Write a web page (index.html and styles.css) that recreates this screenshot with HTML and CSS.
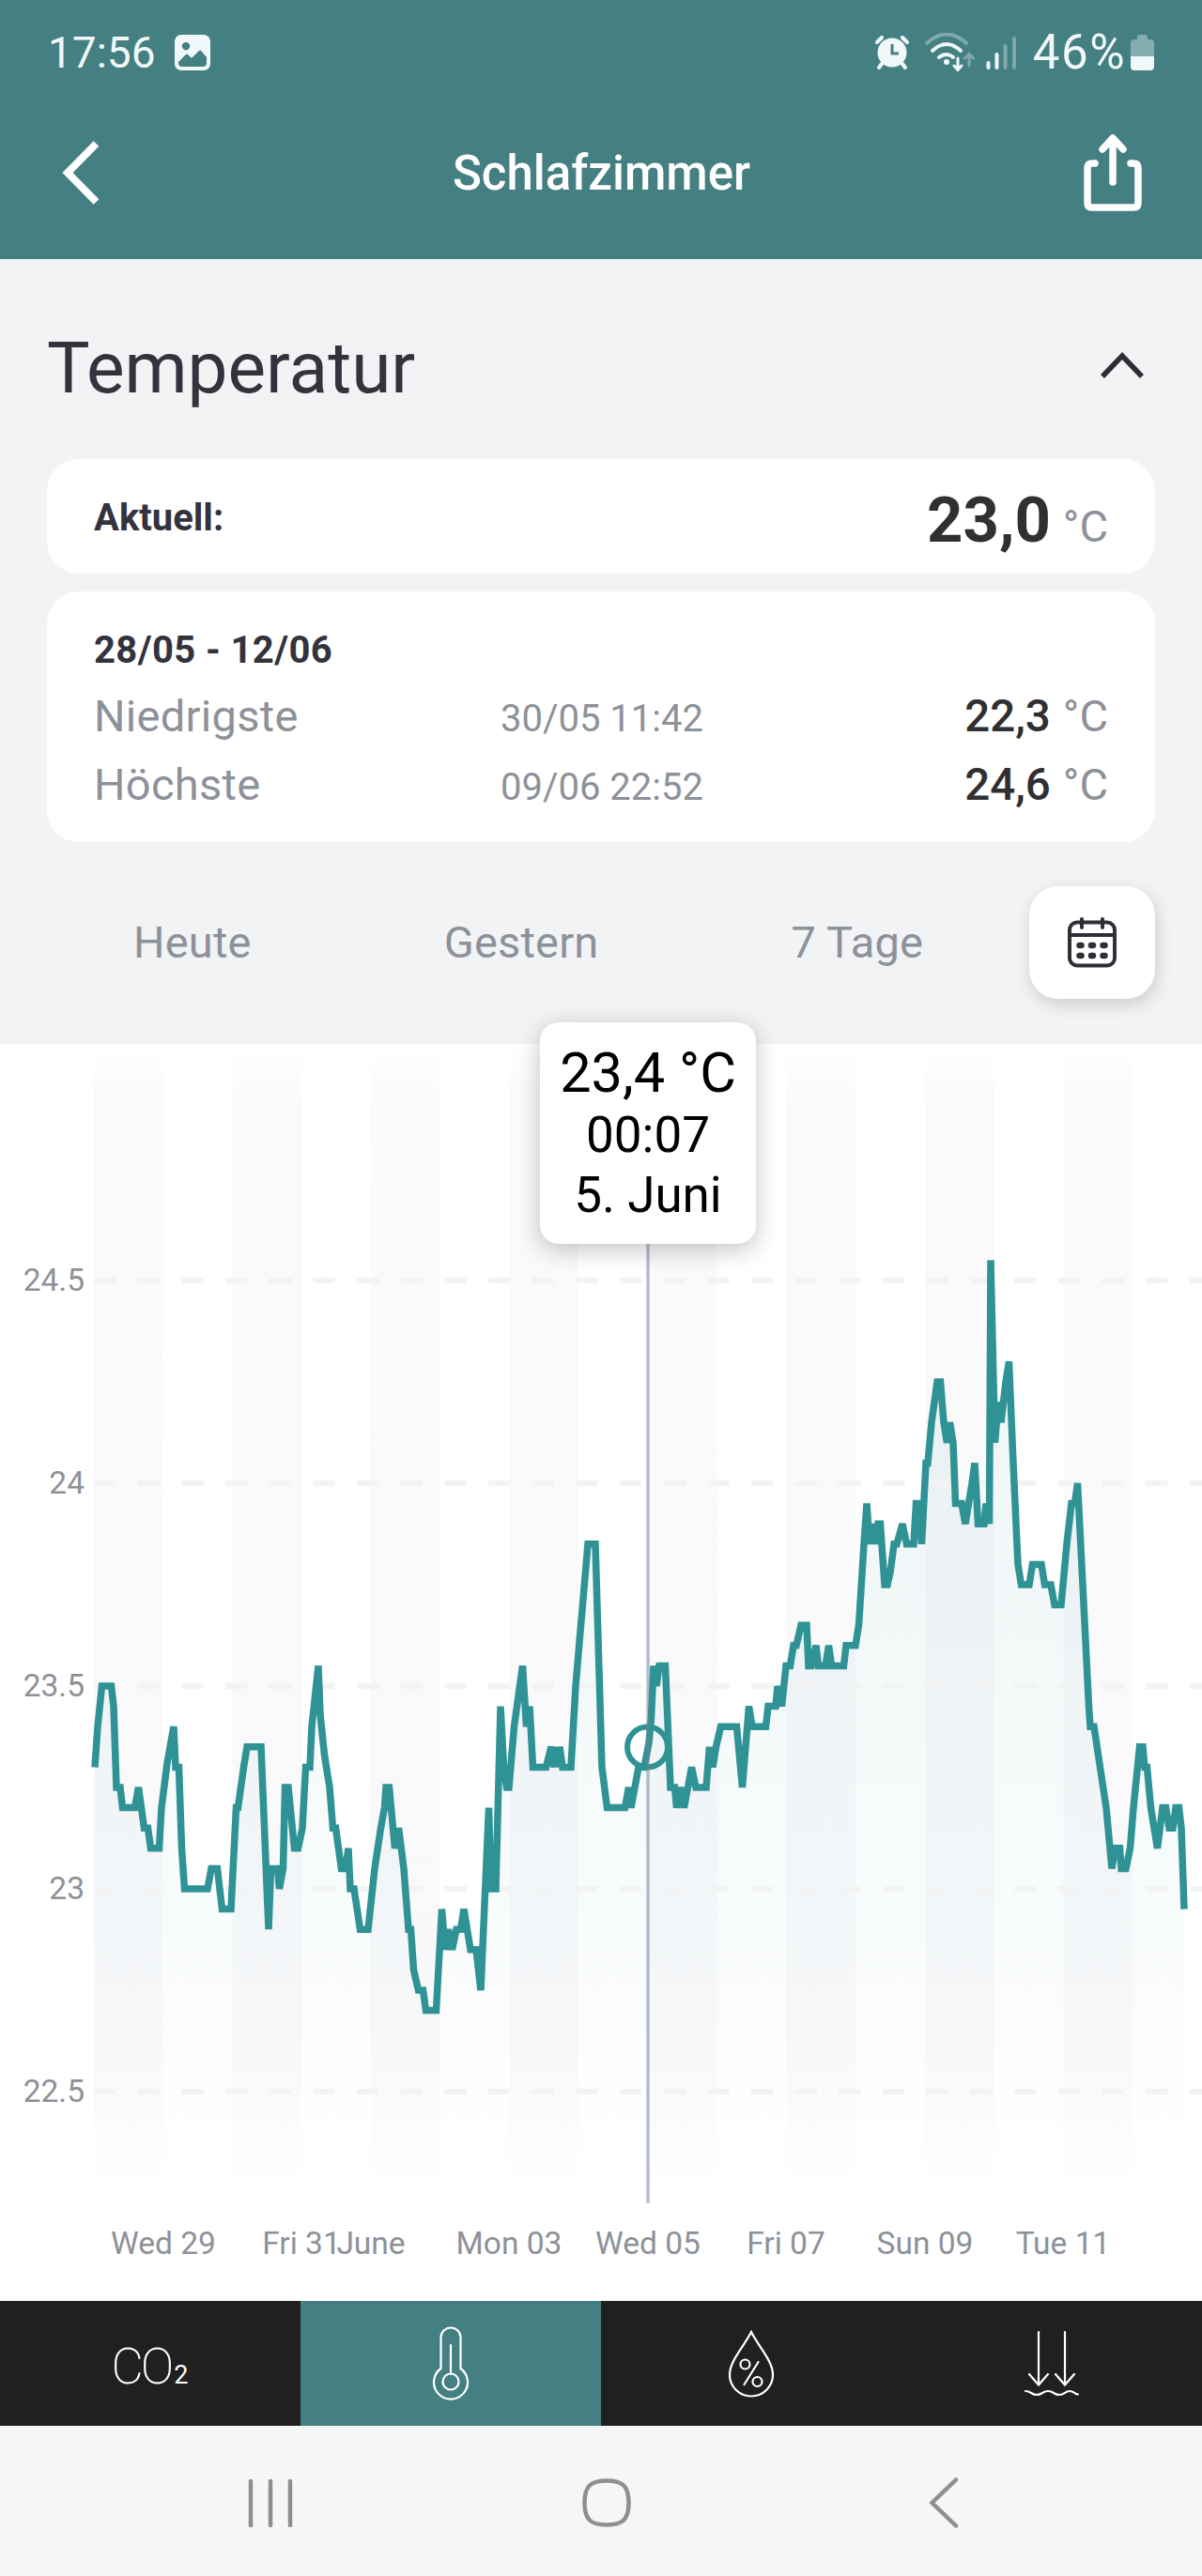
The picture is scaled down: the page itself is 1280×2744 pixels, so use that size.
FILE: index.html
```html
<!DOCTYPE html>
<html lang="de">
<head>
  <meta charset="UTF-8">
  <meta name="viewport" content="width=device-width, initial-scale=1">
  <title>Schlafzimmer</title>
  <link rel="stylesheet" href="styles.css">
</head>
<body>

  <!-- HEADER -->
  <header class="header">
    <div class="status-bar">
      <div class="status-left">
        <span class="status-text">17:56</span>
        <svg class="icon-image" width="38" height="38" viewBox="0 0 38 38">
          <path fill-rule="evenodd" fill="#f0f8fa" d="M7 0h24a7 7 0 0 1 7 7v24a7 7 0 0 1-7 7H7a7 7 0 0 1-7-7V7a7 7 0 0 1 7-7zM12 8a4.200 4.200 0 1 0 .01 0zM4 29v1a4 4 0 0 0 4 4h22a4 4 0 0 0 4-4v-6l-6-7q-1-1-2 0l-7 7q-1 1-2 0l-3-3q-1-1-2 0z"/>
        </svg>
      </div>
      <div class="status-right">
        <svg width="36" height="36" viewBox="0 0 36 36" class="icon-alarm">
          <circle cx="18" cy="18" r="15.500" fill="#f0f8fa"/>
          <path d="M2 7l5-5M34 7l-5-5M7 30l-3 4M29 30l3 4" stroke="#f0f8fa" stroke-width="4" stroke-linecap="round"/>
          <path d="M18 9v10h7" fill="none" stroke="#447f81" stroke-width="3"/>
        </svg>
        <svg width="54" height="42" viewBox="0 0 54 42" class="icon-wifi">
          <g fill="none" stroke="#f0f8fa" stroke-width="4" stroke-linecap="round">
            <path d="M2 11q21-19 42 0" opacity=".35"/>
            <path d="M8 19q15-14 30 0M15 26q8-6 15 0"/>
            <path d="M35 27v12M31 35l4 4.500 4-4.500" stroke-width="3"/>
            <path d="M47 35V23M42.500 27l4.500-4.500 4.500 4.500" stroke-width="3" opacity=".35"/>
          </g>
          <circle cx="23" cy="31" r="3" fill="#f0f8fa"/>
        </svg>
        <svg width="33" height="35" viewBox="0 0 33 35" class="icon-signal">
          <g stroke="#f0f8fa" stroke-width="4" stroke-linecap="round">
            <path d="M2.500 28v5M11.500 19v14"/>
            <path d="M20.500 10v23M30 2v31" opacity=".35"/>
          </g>
        </svg>
        <span class="status-text battery-text">46%</span>
        <svg width="25" height="38" viewBox="0 0 25 38" class="icon-battery">
          <path d="M7 5V2q0-2 2-2h7q2 0 2 2v3h3q4 0 4 4v14H0V9q0-4 4-4z" fill="#f0f8fa" opacity=".38"/>
          <path d="M0 23h25v11q0 4-4 4H4q-4 0-4-4z" fill="#f0f8fa"/>
        </svg>
      </div>
    </div>
    <div class="app-bar">
      <svg width="44" height="70" viewBox="0 0 44 70" class="icon-back">
        <path d="M37.500 4L7 35l30.500 31" fill="none" stroke="#fff" stroke-width="8"/>
      </svg>
      <h1>Schlafzimmer</h1>
      <svg width="62" height="82" viewBox="0 0 62 82" class="icon-share">
        <g fill="none" stroke="#fff" stroke-width="7.500" stroke-linecap="round" stroke-linejoin="round">
          <path d="M12 31H9q-5 0-5 5v37q0 5 5 5h44q5 0 5-5V36q0-5-5-5h-3"/>
          <path d="M31 51V5M20 16L31 4l11 12"/>
        </g>
      </svg>
    </div>
  </header>

  <!-- SUMMARY -->
  <section class="summary">
    <div class="summary-title">
      <h2>Temperatur</h2>
      <svg width="48" height="36" viewBox="0 0 48 36">
        <path d="M3 27L24 5l21 22" fill="none" stroke="#2e2e32" stroke-width="5.500"/>
      </svg>
    </div>

    <div class="card current">
      <span class="card-label">Aktuell:</span>
      <span class="value"><b class="value-big">23,0</b><span class="unit">°C</span></span>
    </div>

    <div class="card period">
      <div class="card-label">28/05 - 12/06</div>
      <div class="period-row">
        <span class="name">Niedrigste</span>
        <span class="time">30/05 11:42</span>
        <span class="value"><b>22,3</b><span class="unit">°C</span></span>
      </div>
      <div class="period-row">
        <span class="name">Höchste</span>
        <span class="time">09/06 22:52</span>
        <span class="value"><b>24,6</b><span class="unit">°C</span></span>
      </div>
    </div>

    <div class="ranges">
      <span>Heute</span>
      <span>Gestern</span>
      <span>7 Tage</span>
      <button class="calendar">
        <svg width="54" height="54" viewBox="0 0 54 54">
          <g fill="none" stroke="#2f2f38" stroke-width="4" stroke-linecap="round">
            <rect x="3" y="5.500" width="48" height="46" rx="8"/>
            <path d="M3 19h48M16 2v9M38 2v9"/>
            <path d="M13.500 30h2M26 30h2M38.500 30h2M13.500 41h2M26 41h2M38.500 41h2" stroke-width="6.500"/>
          </g>
        </svg>
      </button>
    </div>
  </section>

  <!-- CHART -->
  <section class="chart">
    <svg id="plot" width="1280" height="1339" viewBox="0 1112 1280 1339">
      <defs>
        <linearGradient id="bandFill" x1="0" y1="1112" x2="0" y2="2345" gradientUnits="userSpaceOnUse">
          <stop offset="0" stop-color="#fafafb" stop-opacity="0"/>
          <stop offset=".05" stop-color="#fafafb"/>
          <stop offset=".86" stop-color="#f9f9fb"/>
          <stop offset="1" stop-color="#fafafb" stop-opacity="0"/>
        </linearGradient>
        <linearGradient id="areaFill" x1="0" y1="1340" x2="0" y2="2330" gradientUnits="userSpaceOnUse">
          <stop offset="0" stop-color="#2f8f94" stop-opacity=".085"/>
          <stop offset=".4" stop-color="#2f8f94" stop-opacity=".06"/>
          <stop offset="1" stop-color="#2f8f94" stop-opacity="0"/>
        </linearGradient>
      </defs>
      <g id="bands" fill="url(#bandFill)"></g>
      <path id="area" fill="url(#areaFill)"/>
      <g id="grid" class="grid"></g>
      <path id="line" class="line"/>
      <g id="labelsY" class="labels" text-anchor="end"></g>
      <g id="labelsX" class="labels" text-anchor="middle"></g>
      <circle class="marker" cx="689.500" cy="1861" r="21.500"/>
      <path class="cursor" d="M690 1320V2347"/>
    </svg>
    <div class="tooltip">
      <div class="tooltip-value">23,4 °C</div>
      <div>00:07</div>
      <div>5. Juni</div>
    </div>
  </section>

  <!-- TABS -->
  <nav class="tabs">
    <div class="tab"><span class="co2">CO<span class="co2-sub">2</span></span></div>
    <div class="tab active">
      <svg width="42" height="80" viewBox="0 0 42 80">
        <g fill="none" stroke="#fff" stroke-width="2.200">
          <path d="M10.500 45V12a10.500 10.500 0 0 1 21 0v33a18 18 0 1 1-21 0z"/>
          <circle cx="21" cy="59" r="8.500"/>
          <path d="M21 20v30.500" stroke-linecap="round"/>
        </g>
      </svg>
    </div>
    <div class="tab">
      <svg width="50" height="74" viewBox="0 0 50 74">
        <g fill="none" stroke="#fff" stroke-width="2.200" stroke-linecap="round">
          <path d="M25 3C17 19 2 34 2 48.500a23 23 0 0 0 46 0C48 34 33 19 25 3z"/>
          <ellipse cx="18.500" cy="37.500" rx="5" ry="5"/>
          <ellipse cx="31.500" cy="56" rx="5" ry="5"/>
          <path d="M32.500 35L17.500 59"/>
        </g>
      </svg>
    </div>
    <div class="tab">
      <svg width="60" height="72" viewBox="0 0 60 72">
        <g fill="none" stroke="#fff" stroke-width="2.200" stroke-linecap="round">
          <path d="M16 2v56M6 47l10 11.500L26 47M44 2v56M34 47l10 11.500L54 47"/>
          <path d="M2 65c6 0 6 4 12 4s6-4 12-4 6 4 12 4 6-4 11-4 5 3.500 9 3.500"/>
        </g>
      </svg>
    </div>
  </nav>

  <!-- ANDROID BUTTONS -->
  <div class="navbar">
    <svg width="48" height="52" viewBox="0 0 48 52">
      <path d="M3 3v47M24 3v47M45 3v47" stroke="#8f8f8f" stroke-width="4.500" stroke-linecap="round"/>
    </svg>
    <svg width="52" height="52" viewBox="0 0 52 52">
      <path d="M26 2.500C43 2.500 49.500 8 49.500 26S43 49.500 26 49.500 2.500 44 2.500 26 9 2.500 26 2.500z" fill="none" stroke="#8f8f8f" stroke-width="4.500"/>
    </svg>
    <svg width="32" height="54" viewBox="0 0 32 54" class="nav-back">
      <path d="M29 2.500L3.500 27 29 51.500" fill="none" stroke="#8f8f8f" stroke-width="4.500" stroke-linecap="round"/>
    </svg>
  </div>

  <script src="chart.js"></script>
</body>
</html>
```
FILE: styles.css
```css
* {
  margin: 0;
  padding: 0;
  box-sizing: border-box;
}
body {
  width: 1280px;
  background: #fff;
  font-family: Roboto, sans-serif;
  color: #33333d;
}
svg {
  display: block;
  flex-shrink: 0;
}

/* ===== HEADER ===== */
.header {
  height: 276px;
  background: #447f81;
  color: #fff;
}
.status-bar {
  display: flex;
  justify-content: space-between;
  height: 112px;
  padding: 0 51px;
}
.status-left, .status-right {
  display: flex;
  align-items: center;
}
.status-text {
  font-size: 46px;
  line-height: 112px;
  color: #f0f8fa;
}
.battery-text {
  font-size: 51px;
  letter-spacing: 1.5px;
}
.icon-image { margin-left: 20px; }
.icon-wifi { margin-left: 17px; }
.icon-signal { margin: 0 17px 0 11px; }
.icon-battery { margin-left: 5px; }
.app-bar {
  display: grid;
  grid-template-columns: 1fr auto 1fr;
  align-items: center;
  height: 142px;
  padding: 0 64px 0 65px;
}
.app-bar h1 {
  font-size: 51px;
  font-weight: 500;
  line-height: 142px;
  padding-top: 2px;
}
.icon-share { justify-self: end; }

/* ===== SUMMARY ===== */
.summary {
  height: 836px;
  padding: 62px 50px 48px 50px;
  background: #f2f3f5;
}
.summary-title {
  display: flex;
  align-items: center;
  justify-content: space-between;
  height: 107px;
  margin-bottom: 44px;
  padding-right: 11px;
}
.summary-title h2 {
  font-size: 76.5px;
  font-weight: 400;
}
.card {
  padding: 0 50px;
  border-radius: 34px;
  background: #fff;
}
.card-label {
  font-size: 40px;
  font-weight: 700;
}
.current {
  display: flex;
  align-items: center;
  justify-content: space-between;
  height: 122px;
  margin-bottom: 19px;
}
.current .card-label { padding-top: 2px; }
.current .value { padding-top: 8px; }
.value b {
  font-size: 47.5px;
  font-weight: 500;
  color: #303032;
}
.value .value-big {
  font-size: 67px;
  font-weight: 700;
}
.unit {
  margin-left: 13px;
  font-size: 47px;
  color: #8d9199;
}
.period {
  height: 267px;
  padding-top: 26px;
}
.period .card-label {
  line-height: 73px;
  height: 72px;
  letter-spacing: 0.4px;
}
.period-row {
  display: grid;
  grid-template-columns: 433px 1fr auto;
  align-items: baseline;
  height: 73px;
  line-height: 70px;
  color: #8d9199;
}
.name {
  font-size: 47px;
  letter-spacing: 0.3px;
}
.time { font-size: 40px; }
.ranges {
  display: flex;
  align-items: center;
  gap: 205px;
  height: 120px;
  margin-top: 47px;
  padding-left: 92px;
  font-size: 47px;
  line-height: 118px;
  letter-spacing: 0.2px;
  white-space: nowrap;
  color: #8d9199;
}
.calendar {
  display: flex;
  align-items: center;
  justify-content: center;
  flex-shrink: 0;
  width: 134px;
  height: 120px;
  margin-left: auto;
  border: none;
  border-radius: 31px;
  background: #fff;
  box-shadow: 2px 6px 18px rgba(0, 0, 0, 0.16);
}
/* the button sits closer to its neighbour than the gap allows */
.ranges span:nth-child(3) { margin-right: -120px; }

/* ===== CHART ===== */
.chart {
  position: relative;
  height: 1339px;
}
.grid {
  stroke: #f3f3f4;
  stroke-width: 6;
  stroke-dasharray: 23.3 23.37;
}
.line {
  fill: none;
  stroke: #2f9295;
  stroke-width: 7.5;
  stroke-linejoin: miter;
  stroke-miterlimit: 2;
}
.labels {
  font-size: 33.5px;
  fill: #8d9199;
}
.marker {
  fill: none;
  stroke: #2f9295;
  stroke-width: 6;
}
.cursor {
  stroke: #6e7f98;
  stroke-opacity: 0.5;
  stroke-width: 3.5;
}
.tooltip {
  position: absolute;
  top: -23px;
  left: 575px;
  width: 230px;
  height: 236px;
  padding-top: 20px;
  border-radius: 20px;
  background: #fff;
  box-shadow: 0 6px 26px rgba(0, 0, 0, 0.24);
  color: #000;
  font-size: 53px;
  line-height: 63.5px;
  text-align: center;
  white-space: nowrap;
}
.tooltip-value {
  font-size: 59.5px;
  line-height: 69px;
}

/* ===== TABS ===== */
.tabs {
  display: grid;
  grid-template-columns: repeat(4, 1fr);
  height: 133px;
  background: #202020;
}
.tab {
  display: flex;
  align-items: center;
  justify-content: center;
}
.active { background: #447f81; }
.co2 {
  padding: 7px 4px 0 0;
  color: #fff;
  font-size: 53px;
  font-weight: 200;
  letter-spacing: -3px;
}
.co2-sub {
  margin-left: 3px;
  font-size: 27px;
  font-weight: 400;
}

/* ===== ANDROID BUTTONS ===== */
.navbar {
  display: flex;
  align-items: center;
  gap: 308px;
  height: 160px;
  padding: 3px 0 0 264px;
  background: #f5f6f8;
}
.nav-back { margin-left: 9px; }
```
FILE: chart.js
```js
// [x position, temperature]
const data = [
  [101, 23.3], [104, 23.4], [108.5, 23.5], [118.5, 23.5], [121, 23.45], [124, 23.25], [128, 23.25],
  [130.5, 23.2], [143.5, 23.2], [147.5, 23.25], [153.5, 23.15], [157.5, 23.15], [160.5, 23.1], [169.5, 23.1],
  [172, 23.2], [178, 23.31], [185, 23.4], [187, 23.3], [190.5, 23.3], [193.5, 23.1], [196.5, 23],
  [221, 23], [225, 23.05], [231.5, 23.05], [236.5, 22.95], [246, 22.95], [251.5, 23.2], [253.5, 23.2],
  [259.5, 23.3], [263, 23.35], [278, 23.35], [286, 22.9], [288.5, 23.05], [295.5, 23.05], [297.5, 23],
  [301.5, 23.05], [303.5, 23.25], [307, 23.25], [313.5, 23.1], [317.5, 23.1], [322, 23.15], [325.5, 23.3],
  [330, 23.3], [332, 23.4], [339, 23.55], [341, 23.43], [345.5, 23.33], [351, 23.25], [354.5, 23.15],
  [357.5, 23.15], [363.5, 23.05], [368, 23.05], [371, 23.1], [373, 23], [377, 23], [383.5, 22.9],
  [392, 22.9], [399, 23.05], [405.5, 23.15], [409.5, 23.2], [411, 23.25], [414.5, 23.25], [420.5, 23.1],
  [424.5, 23.15], [430, 23.05], [435, 22.9], [437.5, 22.9], [440.5, 22.8], [445.5, 22.75], [450.5, 22.75],
  [453.5, 22.7], [464.5, 22.7], [470.5, 22.95], [474, 22.85], [477.5, 22.9], [481.5, 22.85], [486, 22.9],
  [490.5, 22.9], [494, 22.95], [501, 22.85], [507, 22.85], [512, 22.75], [520.5, 23.2], [523, 23],
  [528, 23], [533, 23.45], [536.5, 23.3], [539.5, 23.25], [542, 23.25], [547.5, 23.4], [556.5, 23.55], [560.5, 23.4],
  [564, 23.45], [567.5, 23.3], [581.5, 23.3], [587, 23.35], [590, 23.3], [592, 23.35], [594, 23.3], [596, 23.35], [599, 23.3], [608, 23.3],
  [613, 23.5], [626, 23.85], [634, 23.85], [641, 23.3], [646.5, 23.2], [665.5, 23.2], [669.5, 23.25],
  [672, 23.2], [680, 23.3], [686, 23.3], [691, 23.36], [693.5, 23.42], [696, 23.55], [699, 23.5], [702, 23.55], [708.5, 23.55],
  [714, 23.25], [718.5, 23.25], [720.5, 23.2], [724.5, 23.25], [728.5, 23.2], [736.5, 23.3], [741, 23.25],
  [752, 23.25], [755.5, 23.35], [759, 23.3], [762.5, 23.35], [767.5, 23.4], [784.5, 23.4], [790.5, 23.25],
  [797.5, 23.45], [801, 23.4], [815.5, 23.4], [818, 23.45], [826, 23.45], [828, 23.5], [832.5, 23.45],
  [837, 23.55], [841.5, 23.55], [845, 23.6], [848, 23.6], [853, 23.65], [859, 23.65], [861, 23.55], [864, 23.55],
  [869, 23.6], [871.5, 23.55], [879, 23.55], [882.5, 23.6], [885.5, 23.55], [898.5, 23.55], [901, 23.6],
  [911, 23.6], [914.5, 23.65], [920, 23.85], [923, 23.95], [926, 23.85], [929, 23.9], [932, 23.85],
  [935, 23.9], [937.5, 23.9], [942, 23.75], [945, 23.75], [948, 23.78], [952, 23.85], [955, 23.85],
  [961, 23.9], [965.5, 23.85], [973, 23.85], [975.5, 23.95], [978, 23.95], [981.5, 23.85], [986, 24.05],
  [988, 24.05], [992, 24.15], [998, 24.25], [1001.5, 24.25], [1005, 24.15], [1008.5, 24.1], [1011.5, 24.15],
  [1015, 24.1], [1017.5, 23.95], [1024, 23.95], [1028, 23.9], [1035, 24], [1038, 24.05], [1041.5, 23.9],
  [1048, 23.9], [1050, 23.95], [1053.5, 23.9], [1055, 24.55], [1059.5, 24.1], [1063, 24.2], [1066, 24.15],
  [1071, 24.25], [1074.5, 24.3], [1079, 24.05], [1084, 23.8], [1087.5, 23.75], [1096, 23.75], [1099.5, 23.8],
  [1109, 23.8], [1112.5, 23.75], [1119, 23.75], [1123, 23.7], [1130, 23.7], [1136, 23.85], [1141, 23.95],
  [1144.5, 23.95], [1147.5, 24], [1153, 23.75], [1159.5, 23.45], [1161, 23.4], [1165, 23.4], [1178, 23.2],
  [1182, 23.1], [1184, 23.05], [1187.5, 23.1], [1192.5, 23.1], [1194, 23.05], [1199, 23.05], [1203.5, 23.1],
  [1207, 23.2], [1213.5, 23.35], [1217, 23.35], [1219, 23.3], [1221.5, 23.3], [1225.5, 23.2], [1232.5, 23.1],
  [1238, 23.2], [1241.5, 23.2], [1245, 23.15], [1249, 23.15], [1252, 23.2], [1255.5, 23.2], [1258, 23.15],
  [1261, 22.95]
];

const svgNS = "http://www.w3.org/2000/svg";
const bottom = 2347;

function yPos(temp) {
  return 2012 - (temp - 23) * 432;
}

function add(parentId, name, attrs, text) {
  const el = document.createElementNS(svgNS, name);
  for (const key in attrs) {
    el.setAttribute(key, attrs[key]);
  }
  if (text) el.textContent = text;
  document.getElementById(parentId).appendChild(el);
}

// Every second day is shaded
for (let i = 0; i < 8; i++) {
  add("bands", "rect", { x: 100 + i * 147.5, y: 1112, width: 73.5, height: bottom - 1112 });
}

[24.5, 24, 23.5, 23, 22.5].forEach(function(t) {
  const y = yPos(t);
  add("grid", "path", { d: "M100 " + y + "H1280" });
  add("labelsY", "text", { x: 90, y: y + 11 }, String(t));
});

[["Wed 29", 174], ["Fri 31", 321], ["June", 395], ["Mon 03", 542], ["Wed 05", 690],
 ["Fri 07", 837], ["Sun 09", 985], ["Tue 11", 1132]].forEach(function(l) {
  add("labelsX", "text", { x: l[1], y: 2401 }, l[0]);
});

const points = data.map(function(p) {
  return p[0] + " " + yPos(p[1]).toFixed(1);
}).join("L");

document.getElementById("line").setAttribute("d", "M" + points);
document.getElementById("area").setAttribute("d", "M101 " + bottom + "L" + points + "V" + bottom + "Z");
```
